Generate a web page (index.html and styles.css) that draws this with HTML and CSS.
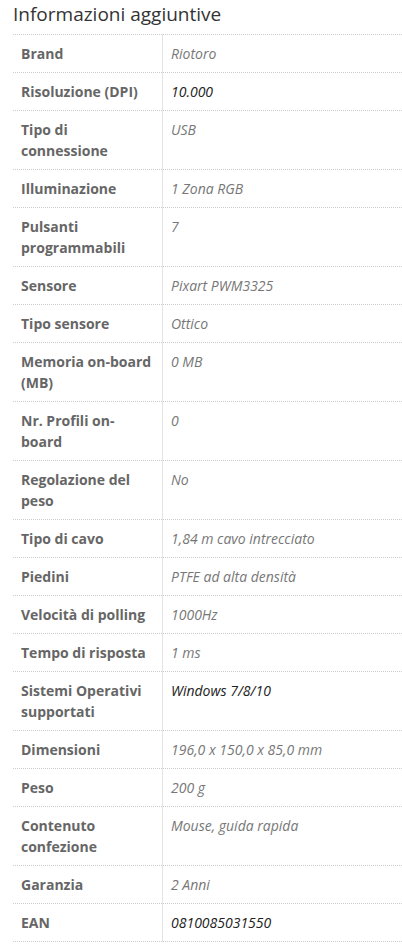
FILE: index.html
```html
<!DOCTYPE html>
<html lang="it">
<head>
<meta charset="utf-8">
<link rel="stylesheet" href="styles.css">
</head>
<body>
<section class="info">
  <h2 class="info-title">Informazioni aggiuntive</h2>
  <table class="attrs">
    <tbody>
      <tr><th>Brand</th><td>Riotoro</td></tr>
      <tr><th>Risoluzione (DPI)</th><td class="dark">10.000</td></tr>
      <tr><th>Tipo di connessione</th><td>USB</td></tr>
      <tr><th>Illuminazione</th><td>1 Zona RGB</td></tr>
      <tr><th>Pulsanti programmabili</th><td>7</td></tr>
      <tr><th>Sensore</th><td>Pixart PWM3325</td></tr>
      <tr><th>Tipo sensore</th><td>Ottico</td></tr>
      <tr><th>Memoria on-board (MB)</th><td>0 MB</td></tr>
      <tr><th>Nr. Profili on-board</th><td>0</td></tr>
      <tr><th>Regolazione del peso</th><td>No</td></tr>
      <tr><th>Tipo di cavo</th><td>1,84 m cavo intrecciato</td></tr>
      <tr><th>Piedini</th><td>PTFE ad alta densità</td></tr>
      <tr><th>Velocità di polling</th><td>1000Hz</td></tr>
      <tr><th>Tempo di risposta</th><td>1 ms</td></tr>
      <tr><th>Sistemi Operativi supportati</th><td class="dark">Windows 7/8/10</td></tr>
      <tr><th>Dimensioni</th><td>196,0 x 150,0 x 85,0 mm</td></tr>
      <tr><th>Peso</th><td>200 g</td></tr>
      <tr><th>Contenuto confezione</th><td>Mouse, guida rapida</td></tr>
      <tr><th>Garanzia</th><td>2 Anni</td></tr>
      <tr><th>EAN</th><td class="dark">0810085031550</td></tr>
    </tbody>
  </table>
</section>
</body>
</html>
```

FILE: styles.css
```css
html, body {
  margin: 0;
  padding: 0;
  background: #ffffff;
  overflow: hidden;
}
body {
  font-family: "Open Sans", "Noto Sans", sans-serif;
  color: #666;
}
.info {
  padding: 0 0 0 13px;
}
.info-title {
  margin: 0;
  padding: 1px 0 0 0;
  height: 33px;
  font-size: 19px;
  font-weight: 400;
  line-height: 26px;
  color: #333;
}
.attrs {
  border-collapse: collapse;
  width: 389px;
  font-size: 14px;
  line-height: 21px;
}
.attrs th,
.attrs td {
  border-top: 1px dotted #ccc;
  border-bottom: 1px dotted #ccc;
  padding: 8px 8px 8px 8px;
  vertical-align: top;
  text-align: left;
}
.attrs th {
  width: 133px;
  font-weight: 700;
  color: #666;
  border-right: 1px solid #e4e4e4;
}
.attrs td {
  font-style: italic;
  color: #777;
}
.attrs td.dark {
  color: #222;
}
```
